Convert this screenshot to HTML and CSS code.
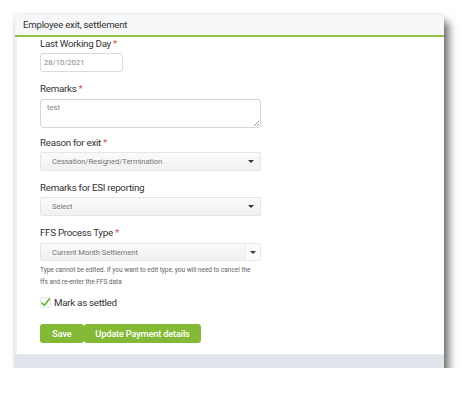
FILE: index.html
```html
<!DOCTYPE html>
<html>
<head>
<meta charset="utf-8">
<link rel="stylesheet" href="styles.css">
</head>
<body>
<div class="panel">
  <div class="panel-head">Employee exit, settlement</div>
  <div class="panel-body">
    <div class="label l1">Last Working Day <span class="req">*</span></div>
    <div class="input date">28/10/2021</div>

    <div class="label l2">Remarks <span class="req">*</span></div>
    <div class="textarea">test<span class="grip"></span></div>

    <div class="label l3">Reason for exit <span class="req">*</span></div>
    <div class="select s1"><span>Cessation/Resigned/Termination</span><i class="caret"></i></div>

    <div class="label l4">Remarks for ESI reporting</div>
    <div class="select s1"><span>Select</span><i class="caret"></i></div>

    <div class="label l4">FFS Process Type <span class="req">*</span></div>
    <div class="select s2"><span class="sel-main">Current Month Settlement</span><span class="sel-btn"><i class="caret"></i></span></div>

    <div class="help">Type cannot be edited. If you want to edit type, you will need to cancel the<br>ffs and re-enter the FFS data</div>

    <div class="check-row">
      <svg class="check" width="11" height="11" viewBox="0 0 11 11"><rect x="0.5" y="0.5" width="10" height="10" rx="1.5" fill="#fafafa" stroke="#e6e6e6"/><path d="M2 6 L4.4 8.3 L9.3 2" fill="none" stroke="#6db33f" stroke-width="1.7" stroke-linecap="round" stroke-linejoin="round"/></svg>
      <span>Mark as settled</span>
    </div>

    <div class="btns">
      <div class="btn save">Save</div>
      <div class="btn update">Update Payment details</div>
    </div>
  </div>
  <div class="panel-foot"></div>
</div>
</body>
</html>
```
FILE: styles.css
```css
* { box-sizing: border-box; }
html, body { margin: 0; padding: 0; background: #fff; }
body {
  font-family: Roboto, "Liberation Sans", Arial, sans-serif;
  color: #333;
  padding: 15px 0 0 15px;
}
.panel {
  width: 429px;
  background: #fff;
  box-shadow: 0 0 4px rgba(0,0,0,0.12), 5px 7px 8px rgba(0,0,0,0.55);
}
.panel-head {
  height: 22px;
  background: #f5f7f9;
  border-bottom: 2px solid #8fbf44;
  font-size: 9.6px;
  letter-spacing: -0.2px;
  line-height: 20px;
  padding-left: 8px;
  color: #333;
}
.panel-body {
  height: 317px;
  padding-left: 25px;
  border-left: 2px solid #f1f1f1;
  display: flex;
  flex-direction: column;
  align-items: flex-start;
}
.panel-body > * { flex-shrink: 0; }
.panel-foot {
  height: 14px;
  background: #dfe5eb;
  border-top: 1px solid #e8ecef;
}
.label {
  font-size: 9.8px;
  letter-spacing: -0.3px;
  line-height: 14px;
  color: #333;
}
.req { color: #d9534f; }
.l1 { margin-top: 0; margin-left: -2px; }
.l2 { margin-top: 10px; margin-left: -2px; }
.l3 { margin-top: 8px; margin-left: -2px; }
.l4 { margin-top: 10px; margin-left: -2px; }
.input {
  border: 1px solid #d9d9d9;
  border-radius: 3px;
  background: #fff;
  font-size: 7.6px;
  color: #888;
}
.date {
  margin-top: 2px;
  margin-left: -2px;
  width: 83px;
  height: 19px;
  line-height: 17px;
  padding-left: 3px;
}
.textarea {
  position: relative;
  margin-top: 3px;
  margin-left: -2px;
  width: 221px;
  height: 29px;
  border: 1px solid #d5d5d5;
  border-radius: 3px;
  font-size: 7.6px;
  color: #888;
  padding: 3px 6px;
}
.grip {
  position: absolute;
  right: 1px;
  bottom: 1px;
  width: 5px;
  height: 5px;
  background: linear-gradient(135deg, transparent 45%, #999 46%, #999 56%, transparent 57%, transparent 72%, #999 73%, #999 83%, transparent 84%);
}
.select {
  margin-left: -2px;
  width: 221px;
  border: 1px solid #e6e6e6;
  border-radius: 2px;
  background: linear-gradient(#fafafa, #f1f1f1);
  font-size: 7.7px;
  letter-spacing: -0.1px;
  color: #777;
  display: flex;
  align-items: center;
  justify-content: space-between;
}
.s1 {
  margin-top: 2px;
  height: 19px;
  padding: 0 6px 0 11px;
}
.s2 {
  margin-top: 3px;
  height: 18px;
  padding: 0;
}
.sel-main {
  flex: 1;
  height: 100%;
  display: flex;
  align-items: center;
  padding-left: 11px;
  border-right: 1px solid #ececec;
}
.sel-btn {
  width: 14px;
  height: 100%;
  background: #fbfbfb;
  display: flex;
  align-items: center;
  justify-content: center;
}
.caret {
  width: 0;
  height: 0;
  border-left: 3px solid transparent;
  border-right: 3px solid transparent;
  border-top: 3px solid #333;
}
.help {
  margin-top: 3px;
  margin-left: -2px;
  font-size: 6.6px;
  letter-spacing: -0.05px;
  line-height: 12px;
  color: #666;
}
.check-row {
  margin-top: 7px;
  margin-left: -2px;
  height: 14px;
  display: flex;
  align-items: center;
  font-size: 9.8px;
  letter-spacing: -0.3px;
  color: #333;
}
.check { margin-right: 3px; }
.btns {
  margin-top: 15px;
  margin-left: -2px;
  display: flex;
}
.btn {
  height: 19px;
  line-height: 19px;
  background: #84b935;
  color: #fff;
  font-size: 9.2px;
  letter-spacing: -0.15px;
  font-weight: 500;
  border-radius: 3px;
  text-align: center;
}
.save { width: 44px; }
.update { width: 117px; }
```
